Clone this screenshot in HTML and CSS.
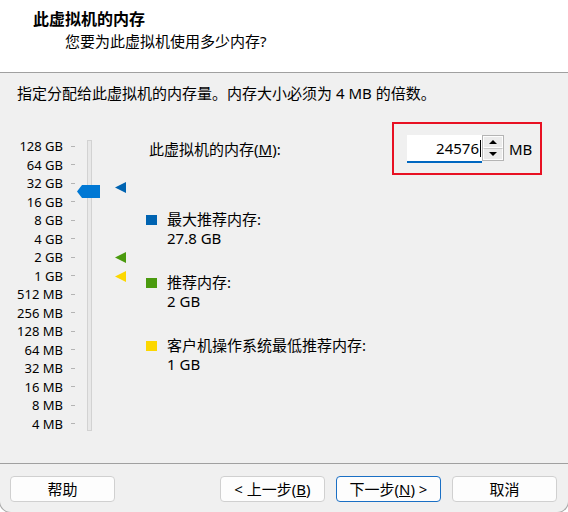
FILE: index.html
```html
<!DOCTYPE html>
<html lang="zh-CN">
<head>
<meta charset="utf-8">
<link rel="stylesheet" href="styles.css">
</head>
<body>
<div class="window">
  <header class="header">
    <div class="title">此虚拟机的内存</div>
    <div class="subtitle">您要为此虚拟机使用多少内存?</div>
  </header>
  <main class="content">
    <p class="intro">指定分配给此虚拟机的内存量。内存大小必须为 4 MB 的倍数。</p>
    <div class="main">
      <div class="slider">
        <ul class="scale">
          <li><span class="lbl">128 GB</span></li>
          <li><span class="lbl">64 GB</span></li>
          <li><span class="lbl">32 GB</span></li>
          <li><span class="lbl">16 GB</span></li>
          <li><span class="lbl">8 GB</span></li>
          <li><span class="lbl">4 GB</span></li>
          <li><span class="lbl">2 GB</span></li>
          <li><span class="lbl">1 GB</span></li>
          <li><span class="lbl">512 MB</span></li>
          <li><span class="lbl">256 MB</span></li>
          <li><span class="lbl">128 MB</span></li>
          <li><span class="lbl">64 MB</span></li>
          <li><span class="lbl">32 MB</span></li>
          <li><span class="lbl">16 MB</span></li>
          <li><span class="lbl">8 MB</span></li>
          <li><span class="lbl">4 MB</span></li>
        </ul>
        <div class="track"></div>
        <div class="thumb"></div>
        <div class="marker marker-max"></div>
        <div class="marker marker-rec"></div>
        <div class="marker marker-min"></div>
      </div>
      <div class="settings">
        <div class="mem-row">
          <span class="mem-label">此虚拟机的内存(<u>M</u>):</span>
          <div class="mem-box">
            <div class="input"><span>24576</span><span class="caret"></span></div>
            <div class="spinner">
              <span class="spin"><i class="up"></i></span>
              <span class="spin"><i class="down"></i></span>
            </div>
            <span class="unit">MB</span>
          </div>
        </div>
        <div class="legend">
          <div class="legend-item">
            <span class="swatch swatch-max"></span>
            <div class="legend-text"><div>最大推荐内存:</div><div>27.8 GB</div></div>
          </div>
          <div class="legend-item">
            <span class="swatch swatch-rec"></span>
            <div class="legend-text"><div>推荐内存:</div><div>2 GB</div></div>
          </div>
          <div class="legend-item">
            <span class="swatch swatch-min"></span>
            <div class="legend-text"><div>客户机操作系统最低推荐内存:</div><div>1 GB</div></div>
          </div>
        </div>
      </div>
    </div>
  </main>
  <footer class="footer">
    <button class="btn">帮助</button>
    <span class="spacer"></span>
    <button class="btn">&lt; 上一步(<u>B</u>)</button>
    <button class="btn btn-default">下一步(<u>N</u>) &gt;</button>
    <button class="btn">取消</button>
  </footer>
</div>
</body>
</html>
```

FILE: styles.css
```css
* { box-sizing: border-box; margin: 0; padding: 0; }
html { background: #ffffff; }
body {
  margin: 0;
  font-family: "Noto Sans", "Noto Sans CJK SC", sans-serif;
  font-size: 15px;
  color: #000;
  overflow: hidden;
}
.window {
  width: 570px;
  height: 513px;
  margin-left: -1px;
  background: #f0f0f0;
  border: 1px solid #a9a9a9;
  border-top: none;
  border-radius: 0 0 12px 12px;
  display: flex;
  flex-direction: column;
  overflow: hidden;
}
.header {
  height: 73px;
  background: #fff;
  border-bottom: 1px solid #a0a0a0;
  padding-top: 9px;
}
.title {
  padding-left: 33px;
  font-weight: 700;
  font-size: 16px;
  line-height: 20px;
}
.subtitle {
  padding-left: 65px;
  margin-top: 2px;
  line-height: 20px;
}
.content { flex: 1; padding-top: 10px; }
.intro { padding-left: 17px; line-height: 20px; }
.main { display: flex; margin-top: 19px; }
.slider { position: relative; width: 146px; padding-top: 15px; }
.scale { list-style: none; }
.scale li {
  display: flex;
  align-items: center;
  height: 18.53px;
  font-size: 13px;
}
.scale .lbl { width: 63px; text-align: right; white-space: nowrap; }
.scale li::after {
  content: "";
  width: 4px;
  height: 1px;
  margin-left: 8px;
  background: #b4b4b4;
}
.track {
  position: absolute;
  left: 87px;
  top: 18px;
  width: 5px;
  height: 291px;
  background: #e8e8e8;
  border: 1px solid #d2d2d2;
}
.thumb {
  position: absolute;
  left: 77px;
  top: 63px;
  width: 23px;
  height: 13px;
  background: #0078d4;
  clip-path: polygon(0 50%, 5px 0, 100% 0, 100% 100%, 5px 100%);
}
.marker {
  position: absolute;
  left: 115px;
  width: 11px;
  height: 11px;
  clip-path: polygon(0 50%, 100% 0, 100% 100%);
}
.marker-max { top: 60px; background: #0063b1; }
.marker-rec { top: 130px; background: #4a9a0e; }
.marker-min { top: 149px; background: #fcd700; }
.settings { flex: 1; }
.mem-row { display: flex; align-items: center; height: 53px; }
.mem-label { padding-left: 3px; line-height: 20px; }
.mem-box {
  margin-left: auto;
  margin-right: 26px;
  width: 150px;
  height: 53px;
  border: 2px solid #e81123;
  display: flex;
  align-items: flex-start;
  padding: 11px 0 0 13px;
}
.input {
  width: 75px;
  height: 28px;
  background: #fff;
  border-bottom: 2px solid #0067c0;
  display: flex;
  justify-content: flex-end;
  align-items: center;
  padding-right: 1px;
  line-height: 26px;
}
.caret { width: 1px; height: 17px; background: #000; margin-left: 1px; }
.spinner {
  width: 22px;
  height: 26px;
  border: 1px solid #b4b4b4;
  display: flex;
  flex-direction: column;
  background: #f0f0f0;
}
.spin {
  flex: 1;
  display: flex;
  align-items: center;
  justify-content: center;
  border: 1px solid #fdfdfd;
  background: #ebebeb;
}
.spin + .spin { border-top: 1px solid #c8c8c8; }
.up, .down { width: 0; height: 0; border-left: 4px solid transparent; border-right: 4px solid transparent; }
.up { border-bottom: 4px solid #000; }
.down { border-top: 4px solid #000; }
.unit { margin-left: 5px; line-height: 28px; }
.legend { margin-top: 34.5px; }
.legend-item { display: flex; }
.legend-item + .legend-item { margin-top: 25px; }
.swatch { width: 11px; height: 10px; margin: 5px 10px 0 0; flex: none; }
.swatch-max { background: #0063b1; }
.swatch-rec { background: #4a9a0e; }
.swatch-min { background: #fcd700; }
.legend-text { line-height: 19px; }
.footer {
  height: 49px;
  border-top: 1px solid #a0a0a0;
  padding: 12px 11px 0 10px;
  display: flex;
  gap: 11px;
}
.spacer { flex: 1; }
.btn {
  width: 105px;
  height: 26px;
  font: inherit;
  font-size: 15px;
  line-height: 22px;
  color: #000;
  background: #fdfdfd;
  border: 1px solid #d0d0d0;
  border-radius: 4px;
}
.btn-default { border-color: #1a6fc4; }
```
